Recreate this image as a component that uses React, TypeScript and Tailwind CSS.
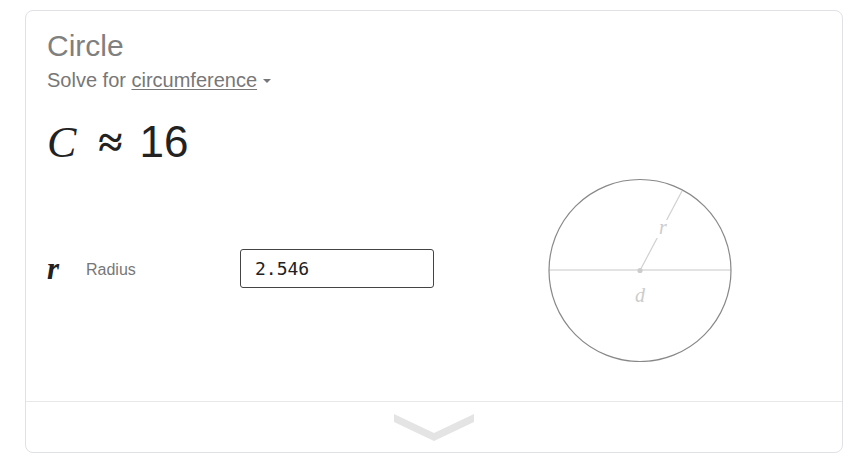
import React from "react"

const serif = "font-['Liberation_Serif','Times_New_Roman',serif]"

function CircleDiagram() {
    return (
        <svg width="184" height="184" viewBox="0 0 184 184" className="block shrink-0">
            <line x1="1" y1="92" x2="183" y2="92" stroke="#dadada" strokeWidth="1.5" />
            <line x1="92" y1="92.5" x2="134" y2="13" stroke="#d0d0d0" strokeWidth="1.2" />
            <rect x="108" y="42" width="14" height="18" fill="#ffffff" />
            <circle cx="92" cy="92.5" r="91" fill="none" stroke="#888888" strokeWidth="1.2" />
            <circle cx="92" cy="92.5" r="2.6" fill="#cccccc" />
            <text
                x="115"
                y="56"
                textAnchor="middle"
                fill="#cccccc"
                fontSize="20"
                fontStyle="italic"
                fontFamily="Liberation Serif, serif"
            >
                r
            </text>
            <text
                x="92"
                y="124"
                textAnchor="middle"
                fill="#cccccc"
                fontSize="20"
                fontStyle="italic"
                fontFamily="Liberation Serif, serif"
            >
                d
            </text>
        </svg>
    )
}

function Chevron() {
    return (
        <svg width="80" height="27" viewBox="0 0 80 27" className="block">
            <polygon points="0,0 40,19 80,0 80,8 40,27 0,8" fill="#e4e4e4" />
        </svg>
    )
}

export default function App() {
    return (
        <div className="w-[857px] h-[464px] bg-white pt-[10px] pl-[25px] pr-[14px] font-['Liberation_Sans',Arial,sans-serif]">
            <div className="border border-[#dfe1e5] rounded-lg bg-white">
                <div className="px-[21px] pt-[20px] pb-[39px]">
                    <div className="text-[30px] leading-[30px] text-[#808080]">Circle</div>
                    <div className="mt-[7px] flex items-center text-[20px] leading-[24px] text-[#777777]">
                        <span>Solve for&nbsp;</span>
                        <span className="underline decoration-1 underline-offset-2">circumference</span>
                        <span className="ml-[6px] mt-[2px] w-0 h-0 border-l-[4px] border-r-[4px] border-t-[4px] border-l-transparent border-r-transparent border-t-[#777777]" />
                    </div>
                    <div className="mt-[26px] text-[44px] leading-[48px] text-[#222222] whitespace-nowrap">
                        <span className={`${serif} italic`}>C</span>
                        <span className={`${serif} font-bold ml-[22px]`}>≈</span>
                        <span className="ml-[17px]">16</span>
                    </div>
                    <div className="mt-[11px] flex items-center">
                        <div className="flex items-center mb-[3px]">
                            <span className={`${serif} italic font-bold text-[31px] leading-[28px] text-[#222222] w-[39px]`}>r</span>
                            <span className="w-[154px] text-[16px] leading-[20px] text-[#777777] pt-[2px]">Radius</span>
                            <div className="w-[194px] h-[39px] border border-[#444444] rounded-[3px] flex items-center pl-[14px] font-['DejaVu_Sans_Mono',monospace] text-[18px] text-[#222222]">
                                2.546
                            </div>
                        </div>
                        <div className="ml-[114px]">
                            <CircleDiagram />
                        </div>
                    </div>
                </div>
                <div className="border-t border-[#e8e8e8] h-[51px] flex items-center justify-center">
                    <Chevron />
                </div>
            </div>
        </div>
    )
}
